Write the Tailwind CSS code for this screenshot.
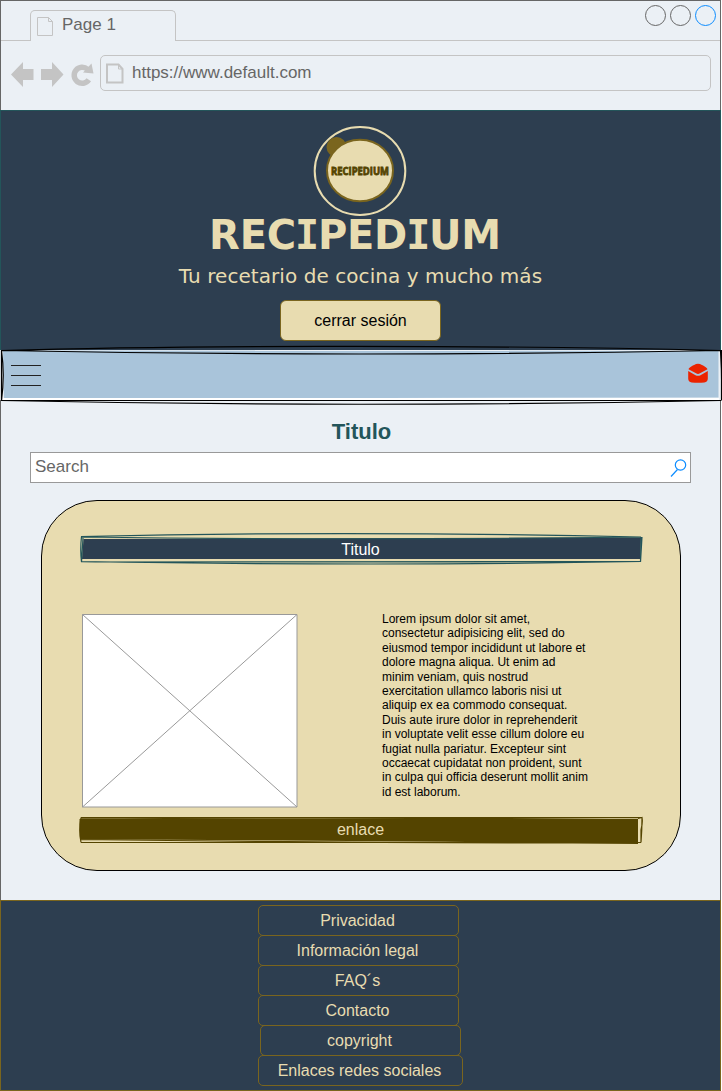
<!DOCTYPE html>
<html lang="es">
<head>
<meta charset="utf-8">
<title>Recipedium</title>
<script src="https://cdn.jsdelivr.net/npm/@tailwindcss/browser@4"></script>
</head>
<body class="bg-white font-['Liberation_Sans',Arial,sans-serif] text-base overflow-hidden">
<div class="relative w-[721px] h-[1091px] flex flex-col bg-[#ebf0f5]">

  <!-- Browser chrome -->
  <div class="h-[110px] shrink-0 border-t border-x border-[#666] flex flex-col text-[17px] text-[#666]">
    <div class="h-10 flex items-end shrink-0">
      <div class="w-[29px] h-px bg-[#c4c4c4]"></div>
      <div class="w-[146px] h-[31px] border border-b-0 border-[#c4c4c4] rounded-t-[5px] flex items-start pl-[6px]">
        <svg class="mt-[6px]" width="17" height="20" fill="none" stroke="#c4c4c4"><path d="M.5.5h11l4 4v14H.5zM11.500.5v4h4"/></svg>
        <span class="ml-2 mt-[5px] leading-[18px]">Page 1</span>
      </div>
      <div class="flex-1 h-10 flex flex-col justify-between items-end border-b border-[#c4c4c4]">
        <svg class="mt-1 mr-[3px]" width="73" height="23" fill="none" stroke="#666"><circle cx="11.500" cy="10.500" r="10"/><circle cx="36.500" cy="10.500" r="10"/><circle cx="61.500" cy="10.500" r="10" stroke="#0c8cff"/></svg>
      </div>
    </div>
    <div class="flex pt-[14px] pl-[10px]">
      <svg class="mt-[6px]" width="84" height="27" fill="#c4c4c4"><path d="M0 13.500 12 1v7h10.500v11H12v7zM52.500 13.500 41 1v7H30v11h11v7z"/><path d="M77.800 18.800a8 8 0 1 1-1.300-10.500" fill="none" stroke="#c4c4c4" stroke-width="5.500"/><path d="m80.500 2.500 2 10-10.500-1z"/></svg>
      <div class="ml-[5px] w-[611px] h-9 border border-[#c4c4c4] rounded-[5px] flex pl-[5px]">
        <svg class="mt-[7px]" width="18" height="21" fill="none" stroke="#c4c4c4"><path stroke-width="2" d="M1 1.500h11.500l4 4.500v13.500H1z"/><path d="M12.500 1.500V6h4"/></svg>
        <span class="ml-[8px] mt-[8px] leading-[18px]">https://www.default.com</span>
      </div>
    </div>
  </div>

  <!-- Header -->
  <header class="h-[240px] shrink-0 bg-[#2d3e50] border-t border-x border-[#23555a] flex flex-col items-center text-[#e8dcb0]">
    <svg class="mt-[14px] mr-[2px] shrink-0" width="94" height="92" viewBox="313 125 94 92">
      <ellipse cx="360" cy="171" rx="45.300" ry="44" fill="none" stroke="#e8dcb0" stroke-width="2"/>
      <circle cx="336.500" cy="147" r="10" fill="#7a651e"/>
      <ellipse cx="360" cy="170.500" rx="33" ry="30.800" fill="#e8dcb0" stroke="#7a651e" stroke-width="2"/>
      <text x="331" y="175.300" textLength="58" lengthAdjust="spacingAndGlyphs" font-family="Open Sans, sans-serif" font-size="10.500" font-weight="700" fill="#544400" stroke="#544400" stroke-width=".8">RECIPEDIUM</text>
    </svg>
    <h1 class="-mt-[4px] mr-[11px] h-[45px] leading-[45px] text-[40px] tracking-[-0.2px] font-bold font-['DejaVu_Sans'] whitespace-nowrap">REC<span class="font-['DejaVu_Sans_Mono'] -mx-px">I</span>PED<span class="font-['DejaVu_Sans_Mono'] -mx-px">I</span>UM</h1>
    <p class="mt-[4px] h-7 leading-7 text-[20px] tracking-[0.06px] font-['DejaVu_Sans'] whitespace-nowrap">Tu recetario de cocina y mucho más</p>
    <button class="mt-[10px] w-[161px] h-[41px] shrink-0 rounded-[6px] border border-[#7a651e] bg-[#e8dcb0] text-black">cerrar sesión</button>
  </header>

  <!-- Navigation bar -->
  <nav class="relative h-[50px] shrink-0 flex justify-between">
    <svg class="absolute left-0 top-0 overflow-visible" width="722" height="50" viewBox="0 350 722 50" fill="none">
      <path fill="#a9c4da" d="M3 350.500 718.500 351v46.500L4 398.500z"/>
      <path fill="#fff" d="M3 398h716v2H3z"/>
      <path stroke="#000" stroke-width="1.200" d="M1 350.500C160 346 450 344 721 350.500C540 354 280 356 1 350.500M1 400.500Q360 408 721 400.500H1M1.500 350.500Q5 375 1.500 400.500M1.500 350.500V400M720.500 350.500Q722 375 721.500 400.500V350"/>
    </svg>
    <svg class="relative ml-[11px] mt-[14px]" width="31" height="24" stroke="#222"><path d="M0 1.500h30M0 11.500h30M0 21.500h30"/></svg>
    <svg class="relative mt-[13px] mr-[12px]" width="22" height="22"><path fill="#eb2300" d="M1.500 6.200C2 4.500 7 2 9 1.100q2-.7 4 0C15 2 20 4.500 20.500 6.200L13 10.300q-2 1.200-4 0zM1.200 8 8.500 12.200q2.500 1.300 5 0L20.800 8v7.500q0 3.500-3.500 4-6.300.7-12.600 0-3.500-.5-3.500-4z"/></svg>
  </nav>

  <!-- Content -->
  <main class="h-[500px] shrink-0 border-x border-[#666] flex flex-col items-center">
    <h2 class="mt-[19px] ml-[2px] h-[26px] leading-[26px] text-[22px] font-bold text-[#23555a]">Titulo</h2>
    <div class="mt-[7px] w-[661px] h-[31px] bg-white border border-[#999] flex justify-between text-[17px] text-[#666]">
      <span class="ml-1 mt-[5px] leading-[18px]">Search</span>
      <svg class="mr-[3px] mt-[5px]" width="17" height="20" fill="none" stroke="#0c8cff" stroke-width="1.200"><circle cx="10.500" cy="7" r="5.200"/><path d="M7.500 11.500 1 18.500"/></svg>
    </div>
    <section class="mt-[17px] w-[640px] h-[371px] rounded-[56px] border border-black bg-[#e8dcb0] flex flex-col px-10">
      <div class="relative mt-[35px] h-[27px] -mx-px shrink-0 text-center text-white">
        <svg class="absolute left-0 top-0 overflow-visible" width="560" height="27" viewBox="81 536 560 27" fill="none">
          <path fill="#2d3e50" d="M83.500 539 641 537.500 640 559H82z"/>
          <path stroke="#23555a" stroke-width="1.200" d="M81 536.500Q350 530.500 641 537Q350 540.500 81 537M81 561.500Q380 566.500 641 561.500M81 562Q380 561.500 641 561.500M81.500 536.500Q80 550 81.500 562M83 538 81.500 562M641 537 640.500 562M642 537 640.500 562"/>
        </svg>
        <span class="relative leading-[27px]">Titulo</span>
      </div>
      <div class="flex mt-[51px] h-[193px] shrink-0">
        <svg class="shrink-0" width="216" height="194"><path d="M.5.5h214.500v192.500H.5zL215 193M215 .5.500 193" fill="#fff" stroke="#999"/></svg>
        <p class="ml-[84.5px] -mt-[2px] text-[12px] leading-[14.4px] text-black whitespace-nowrap">Lorem ipsum dolor sit amet,<br>consectetur adipisicing elit, sed do<br>eiusmod tempor incididunt ut labore et<br>dolore magna aliqua. Ut enim ad<br>minim veniam, quis nostrud<br>exercitation ullamco laboris nisi ut<br>aliquip ex ea commodo consequat.<br>Duis aute irure dolor in reprehenderit<br>in voluptate velit esse cillum dolore eu<br>fugiat nulla pariatur. Excepteur sint<br>occaecat cupidatat non proident, sunt<br>in culpa qui officia deserunt mollit anim<br>id est laborum.</p>
      </div>
      <div class="relative mt-[10px] h-[26px] -mx-px shrink-0 text-center text-[#e8dcb0]">
        <svg class="absolute left-0 top-0 overflow-visible" width="560" height="26" viewBox="81 817 560 26" fill="none">
          <path fill="#544400" d="M79.500 819 638 819v25Q350 840 80 839.500z"/>
          <path stroke="#544400" stroke-width="1.200" d="M81 817.500H642M81 842.500H641M81 817.500Q78.500 830 81 842.500M638 818.500 642 817.500Q642 830 641 842.500M642 818Q643 822 641 830V842M81 818Q350 820 642 817.500M81 839.500Q350 843 638 843"/>
        </svg>
        <span class="relative leading-[25px]">enlace</span>
      </div>
    </section>
  </main>

  <!-- Footer -->
  <footer class="h-[191px] shrink-0 bg-[#2d3e50] border border-[#7a651e] flex flex-col pt-1 pl-[257px] text-[#e8dcb0] text-center leading-[29px]">
    <a class="w-[201px] h-[31px] rounded-[5px] border border-[#7a651e] pr-[2px]">Privacidad</a>
    <a class="-mt-px w-[201px] h-[31px] rounded-[5px] border border-[#7a651e] pr-[2px]">Información legal</a>
    <a class="-mt-px w-[201px] h-[31px] rounded-[5px] border border-[#7a651e] pr-[2px]">FAQ´s</a>
    <a class="-mt-px w-[201px] h-[31px] rounded-[5px] border border-[#7a651e] pr-[2px]">Contacto</a>
    <a class="-mt-px ml-[2px] w-[201px] h-[31px] rounded-[5px] border border-[#7a651e] pr-[2px]">copyright</a>
    <a class="-mt-px w-[205px] h-[31px] rounded-[5px] border border-[#7a651e] pr-[2px]">Enlaces redes sociales</a>
  </footer>
</div>
</body>
</html>
